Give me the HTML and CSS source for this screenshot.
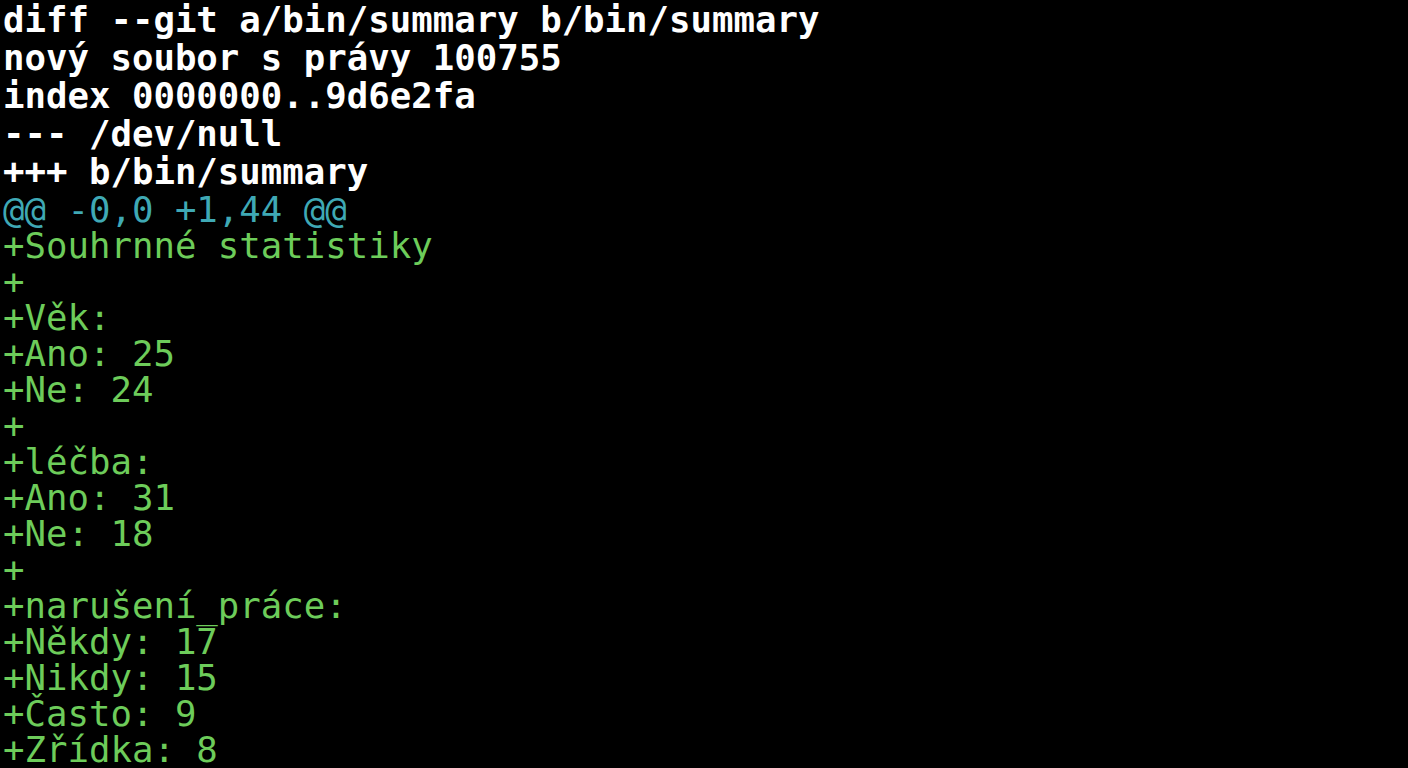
FILE: index.html
```html
<!DOCTYPE html>
<html lang="cs">
<head>
<meta charset="utf-8">
<link rel="stylesheet" href="styles.css">
</head>
<body>
<div class="term">
  <div class="line meta">diff --git a/bin/summary b/bin/summary</div>
  <div class="line meta">nový soubor s právy 100755</div>
  <div class="line meta">index 0000000..9d6e2fa</div>
  <div class="line meta">--- /dev/null</div>
  <div class="line meta">+++ b/bin/summary</div>
  <div class="line hunk">@@ -0,0 +1,44 @@</div>
  <div class="line add">+Souhrnné statistiky</div>
  <div class="line add">+</div>
  <div class="line add">+Věk:</div>
  <div class="line add">+Ano: 25</div>
  <div class="line add">+Ne: 24</div>
  <div class="line add">+</div>
  <div class="line add">+léčba:</div>
  <div class="line add">+Ano: 31</div>
  <div class="line add">+Ne: 18</div>
  <div class="line add">+</div>
  <div class="line add">+narušení_práce:</div>
  <div class="line add">+Někdy: 17</div>
  <div class="line add">+Nikdy: 15</div>
  <div class="line add">+Často: 9</div>
  <div class="line add">+Zřídka: 8</div>
</div>
</body>
</html>
```
FILE: styles.css
```css
html, body {
  margin: 0;
  padding: 0;
  background: #000;
  height: 100%;
  overflow: hidden;
}
.term {
  display: flex;
  flex-direction: column;
  padding: 1px 0 0 3px;
  font-family: "DejaVu Sans Mono", monospace;
  font-size: 35.7px;
  color: #fff;
}
.line {
  white-space: pre;
  line-height: 36px;
  height: 36px;
  flex: none;
}
.meta {
  font-weight: bold;
  color: #fff;
  line-height: 38px;
  height: 38px;
}
.hunk {
  color: #3fa9b5;
  line-height: 38px;
  height: 37px;
}
.add {
  color: #6dcc5a;
}
```
